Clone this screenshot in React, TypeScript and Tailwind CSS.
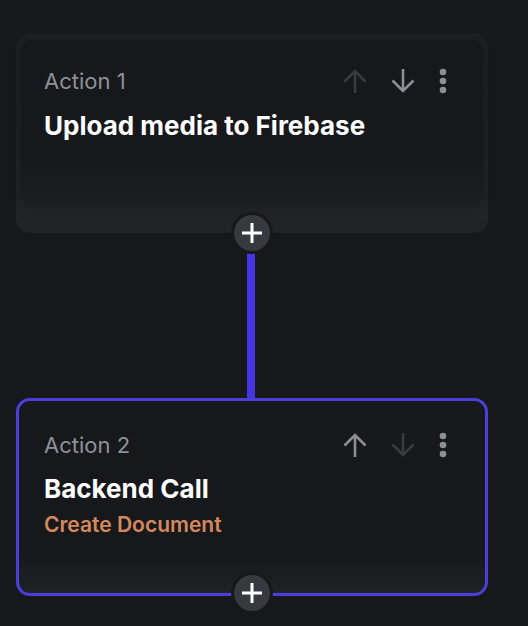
import React from 'react';

const ArrowUp = ({ className }: { className: string }) => (
  <svg viewBox="0 0 26 26" className={className} fill="none" stroke="currentColor" strokeWidth={2.6}>
    <path d="M13 25V3M2.5 13.5L13 3l10.5 10.5" />
  </svg>
);

const ArrowDown = ({ className }: { className: string }) => (
  <svg viewBox="0 0 26 26" className={className} fill="none" stroke="currentColor" strokeWidth={2.6}>
    <path d="M13 1v22M2.5 12.5L13 23l10.5-10.5" />
  </svg>
);

const Dots = () => (
  <svg viewBox="0 0 8 26" className="w-2 h-[26px] text-[#8b8f97]" fill="currentColor">
    <circle cx="4" cy="4" r="3.3" />
    <circle cx="4" cy="13" r="3.3" />
    <circle cx="4" cy="22" r="3.3" />
  </svg>
);

const AddButton = () => (
  <div className="absolute left-1/2 -bottom-[21px] -translate-x-1/2 z-10 w-[42px] h-[42px] rounded-full bg-[#17181c] flex items-center justify-center">
    <div className="w-9 h-9 rounded-full bg-[#363940] flex items-center justify-center">
      <svg viewBox="0 0 20 20" className="w-5 h-5 text-white" stroke="currentColor" strokeWidth={3}>
        <path d="M10 0v20M0 10h20" />
      </svg>
    </div>
  </div>
);

const Header = ({ label, upDim }: { label: string; upDim: boolean }) => (
  <div className="flex items-center justify-between h-[28px]">
    <span className="text-[22px] text-[#8d9199]">{label}</span>
    <div className="flex items-center mr-[11px]">
      <ArrowUp className={`w-[26px] h-[26px] ${upDim ? 'text-[#383b41]' : 'text-[#8b8f97]'}`} />
      <ArrowDown className={`w-[26px] h-[26px] ml-[22px] ${upDim ? 'text-[#8b8f97]' : 'text-[#383b41]'}`} />
      <div className="ml-[23px]">
        <Dots />
      </div>
    </div>
  </div>
);

export default function App() {
  return (
    <div className="min-h-[626px] w-[528px] bg-[#17181c] pt-[33px] pl-4" style={{ fontFamily: 'Inter, "Open Sans", sans-serif' }}>
      <div className="w-[472px] flex flex-col">
        {/* Action 1 */}
        <div className="relative h-[200px] rounded-[14px] bg-gradient-to-b from-[#1d1f23] to-[#212327] px-[5px] pt-[7px]">
          <div className="h-[160px] rounded-[11px] bg-gradient-to-b from-[#17181c] via-[#17181c] via-75% to-[#1b1d21] shadow-[0_4px_10px_rgba(0,0,0,0.25)] pl-[23px] pr-[25px] pt-[27px]">
            <Header label="Action 1" upDim={true} />
            <div className="mt-[15px] text-[26px] font-bold text-white leading-[32px]">
              Upload media to Firebase
            </div>
          </div>
          <AddButton />
        </div>

        {/* connector */}
        <div className="w-2 h-[165px] bg-[#4434e2] self-center -ml-[2px]" />

        {/* Action 2 */}
        <div className="relative h-[198px] rounded-[14px] border-[3px] border-[#4b3fdc] bg-gradient-to-b from-[#17181c] via-[#17181c] via-80% to-[#1f2226] pl-[25px] pr-[27px] pt-[30px]">
          <Header label="Action 2" upDim={false} />
          <div className="mt-[14px] text-[26px] font-bold text-white leading-[32px]">
            Backend Call
          </div>
          <div className="mt-[6px] text-[21px] font-semibold text-[#d4885b] leading-[28px]">
            Create Document
          </div>
          <AddButton />
        </div>
      </div>
    </div>
  );
}
